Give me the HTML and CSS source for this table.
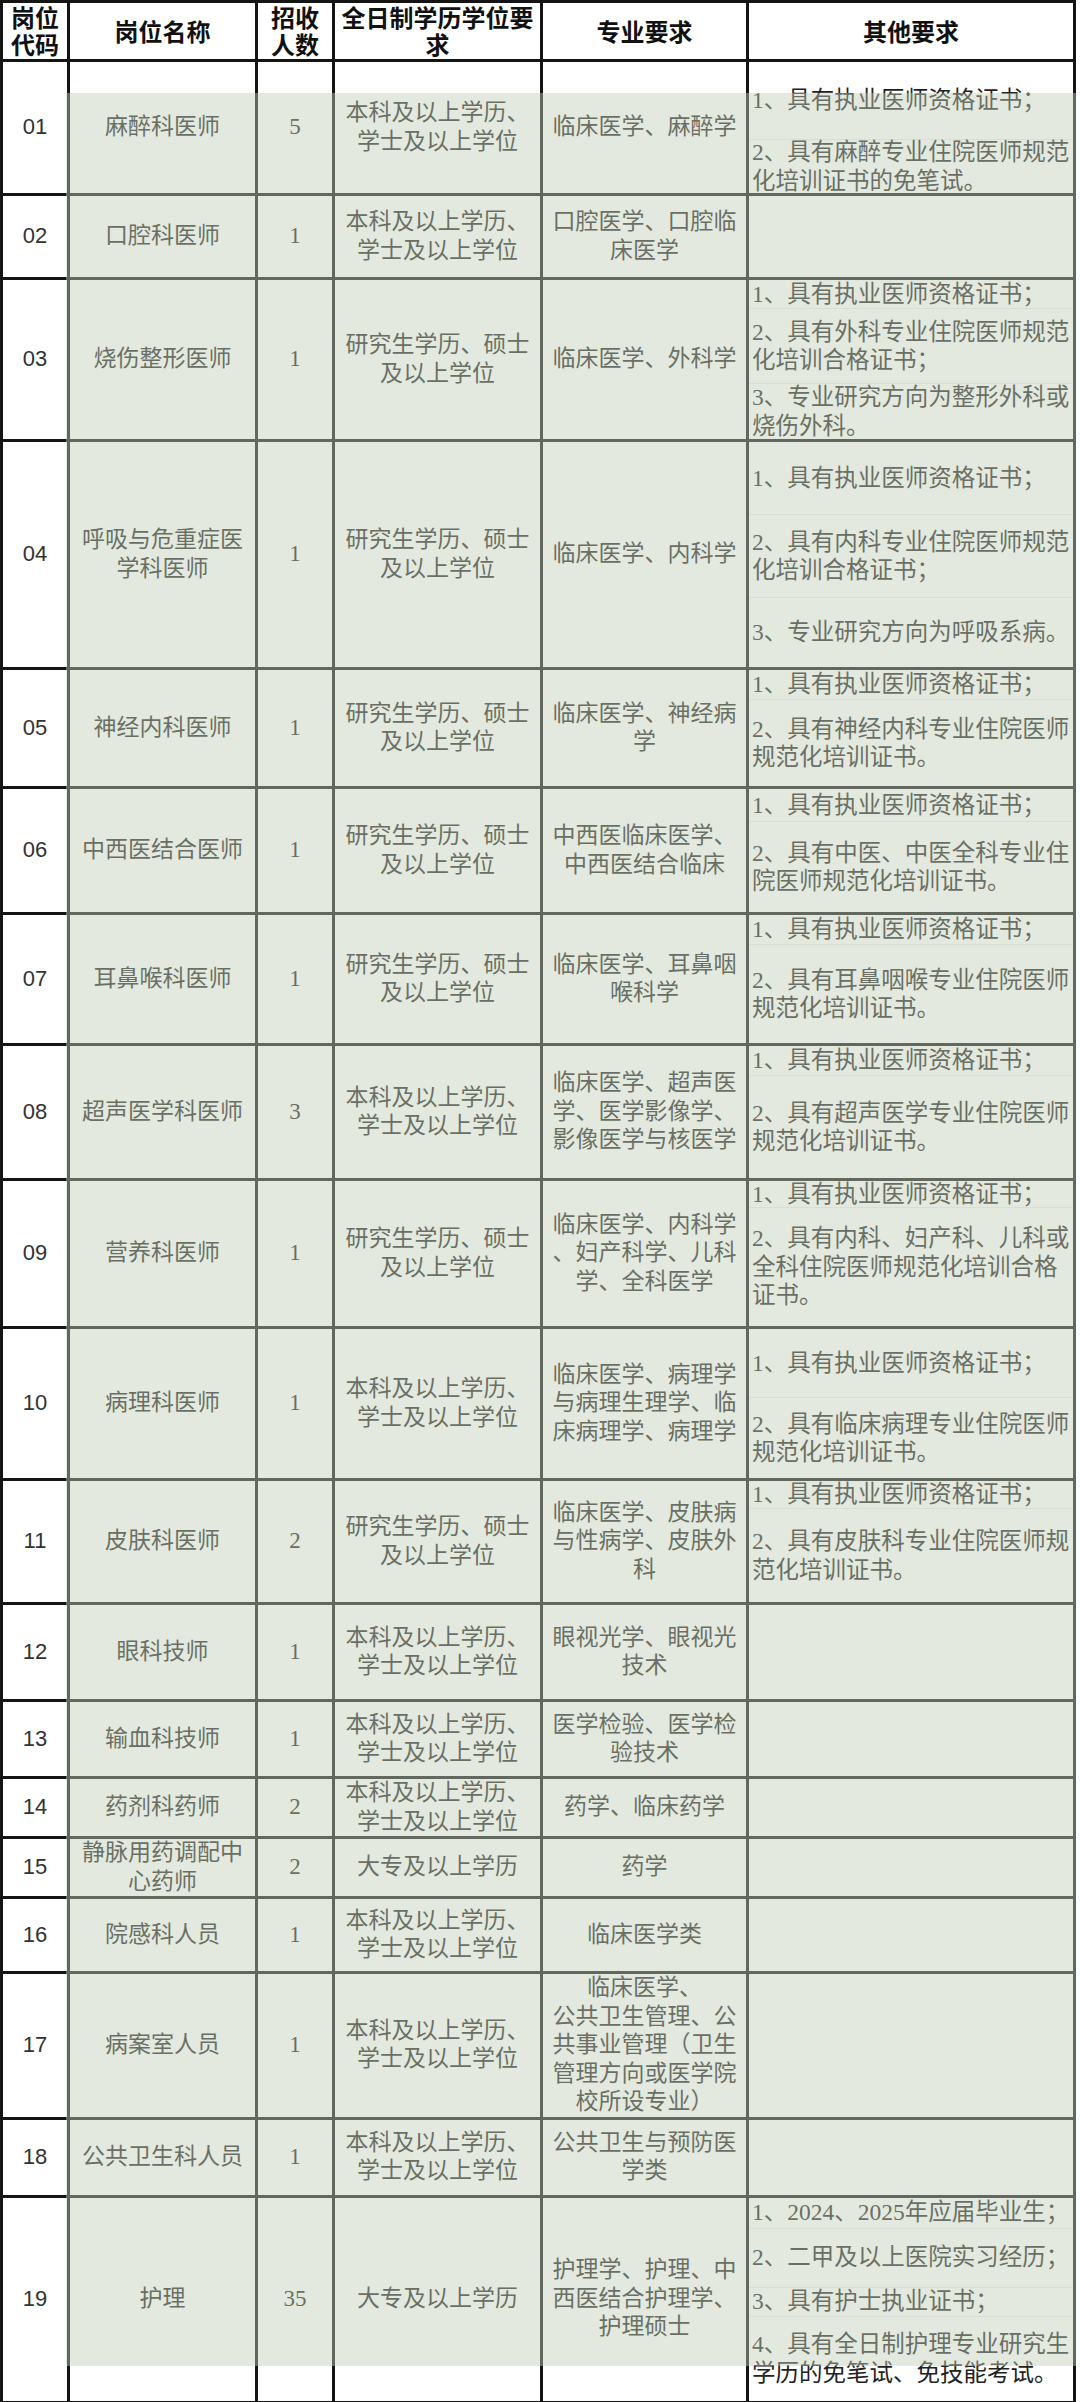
FILE: index.html
```html
<!DOCTYPE html>
<html lang="zh-CN">
<head>
<meta charset="utf-8">
<title>岗位表</title>
<link rel="stylesheet" href="styles.css">
</head>
<body>
<div class="sheet">
<table class="grid">
<colgroup><col class="c1"><col class="c2"><col class="c3"><col class="c4"><col class="c5"><col class="c6"></colgroup>
<thead>
<tr class="hd"><th>岗位<br>代码</th><th>岗位名称</th><th>招收<br>人数</th><th>全日制学历学位要<br>求</th><th>专业要求</th><th>其他要求</th></tr>
</thead>
<tbody>
<tr class="r01"><td class="code">01</td><td>麻醉科医师</td><td>5</td><td>本科及以上学历、<br>学士及以上学位</td><td>临床医学、麻醉学</td>
<td class="other"><div class="items g01"><div class="item"><p class="t">1、具有执业医师资格证书；</p></div><div class="item"><p class="t">2、具有麻醉专业住院医师规范<br>化培训证书的免笔试。</p></div></div></td></tr>

<tr class="r02"><td class="code">02</td><td>口腔科医师</td><td>1</td><td>本科及以上学历、<br>学士及以上学位</td><td>口腔医学、口腔临<br>床医学</td><td class="other"></td></tr>

<tr class="r03"><td class="code">03</td><td>烧伤整形医师</td><td>1</td><td>研究生学历、硕士<br>及以上学位</td><td>临床医学、外科学</td>
<td class="other"><div class="items g03"><div class="item"><p class="t">1、具有执业医师资格证书；</p></div><div class="item"><p class="t">2、具有外科专业住院医师规范<br>化培训合格证书；</p></div><div class="item"><p class="t">3、专业研究方向为整形外科或<br>烧伤外科。</p></div></div></td></tr>

<tr class="r04"><td class="code">04</td><td>呼吸与危重症医<br>学科医师</td><td>1</td><td>研究生学历、硕士<br>及以上学位</td><td>临床医学、内科学</td>
<td class="other"><div class="items g04"><div class="item"><p class="t">1、具有执业医师资格证书；</p></div><div class="item"><p class="t">2、具有内科专业住院医师规范<br>化培训合格证书；</p></div><div class="item"><p class="t">3、专业研究方向为呼吸系病。</p></div></div></td></tr>

<tr class="r05"><td class="code">05</td><td>神经内科医师</td><td>1</td><td>研究生学历、硕士<br>及以上学位</td><td>临床医学、神经病<br>学</td>
<td class="other"><div class="items g05"><div class="item"><p class="t">1、具有执业医师资格证书；</p></div><div class="item"><p class="t">2、具有神经内科专业住院医师<br>规范化培训证书。</p></div></div></td></tr>

<tr class="r06"><td class="code">06</td><td>中西医结合医师</td><td>1</td><td>研究生学历、硕士<br>及以上学位</td><td>中西医临床医学、<br>中西医结合临床</td>
<td class="other"><div class="items g06"><div class="item"><p class="t">1、具有执业医师资格证书；</p></div><div class="item"><p class="t">2、具有中医、中医全科专业住<br>院医师规范化培训证书。</p></div></div></td></tr>

<tr class="r07"><td class="code">07</td><td>耳鼻喉科医师</td><td>1</td><td>研究生学历、硕士<br>及以上学位</td><td>临床医学、耳鼻咽<br>喉科学</td>
<td class="other"><div class="items g07"><div class="item"><p class="t">1、具有执业医师资格证书；</p></div><div class="item"><p class="t">2、具有耳鼻咽喉专业住院医师<br>规范化培训证书。</p></div></div></td></tr>

<tr class="r08"><td class="code">08</td><td>超声医学科医师</td><td>3</td><td>本科及以上学历、<br>学士及以上学位</td><td>临床医学、超声医<br>学、医学影像学、<br>影像医学与核医学</td>
<td class="other"><div class="items g08"><div class="item"><p class="t">1、具有执业医师资格证书；</p></div><div class="item"><p class="t">2、具有超声医学专业住院医师<br>规范化培训证书。</p></div></div></td></tr>

<tr class="r09"><td class="code">09</td><td>营养科医师</td><td>1</td><td>研究生学历、硕士<br>及以上学位</td><td>临床医学、内科学<br>、妇产科学、儿科<br>学、全科医学</td>
<td class="other"><div class="items g09"><div class="item"><p class="t">1、具有执业医师资格证书；</p></div><div class="item"><p class="t">2、具有内科、妇产科、儿科或<br>全科住院医师规范化培训合格<br>证书。</p></div></div></td></tr>

<tr class="r10"><td class="code">10</td><td>病理科医师</td><td>1</td><td>本科及以上学历、<br>学士及以上学位</td><td>临床医学、病理学<br>与病理生理学、临<br>床病理学、病理学</td>
<td class="other"><div class="items g10"><div class="item"><p class="t">1、具有执业医师资格证书；</p></div><div class="item"><p class="t">2、具有临床病理专业住院医师<br>规范化培训证书。</p></div></div></td></tr>

<tr class="r11"><td class="code">11</td><td>皮肤科医师</td><td>2</td><td>研究生学历、硕士<br>及以上学位</td><td>临床医学、皮肤病<br>与性病学、皮肤外<br>科</td>
<td class="other"><div class="items g11"><div class="item"><p class="t">1、具有执业医师资格证书；</p></div><div class="item"><p class="t">2、具有皮肤科专业住院医师规<br>范化培训证书。</p></div></div></td></tr>

<tr class="r12"><td class="code">12</td><td>眼科技师</td><td>1</td><td>本科及以上学历、<br>学士及以上学位</td><td>眼视光学、眼视光<br>技术</td><td class="other"></td></tr>

<tr class="r13"><td class="code">13</td><td>输血科技师</td><td>1</td><td>本科及以上学历、<br>学士及以上学位</td><td>医学检验、医学检<br>验技术</td><td class="other"></td></tr>

<tr class="r14"><td class="code">14</td><td>药剂科药师</td><td>2</td><td>本科及以上学历、<br>学士及以上学位</td><td>药学、临床药学</td><td class="other"></td></tr>

<tr class="r15"><td class="code">15</td><td>静脉用药调配中<br>心药师</td><td>2</td><td>大专及以上学历</td><td>药学</td><td class="other"></td></tr>

<tr class="r16"><td class="code">16</td><td>院感科人员</td><td>1</td><td>本科及以上学历、<br>学士及以上学位</td><td>临床医学类</td><td class="other"></td></tr>

<tr class="r17"><td class="code">17</td><td>病案室人员</td><td>1</td><td>本科及以上学历、<br>学士及以上学位</td><td>临床医学、<br>公共卫生管理、公<br>共事业管理（卫生<br>管理方向或医学院<br>校所设专业）</td><td class="other"></td></tr>

<tr class="r18"><td class="code">18</td><td>公共卫生科人员</td><td>1</td><td>本科及以上学历、<br>学士及以上学位</td><td>公共卫生与预防医<br>学类</td><td class="other"></td></tr>

<tr class="r19"><td class="code">19</td><td>护理</td><td>35</td><td>大专及以上学历</td><td>护理学、护理、中<br>西医结合护理学、<br>护理硕士</td>
<td class="other"><div class="items g19"><div class="item"><p class="t">1、2024、2025年应届毕业生；</p></div><div class="item"><p class="t">2、二甲及以上医院实习经历；</p></div><div class="item"><p class="t">3、具有护士执业证书；</p></div><div class="item"><p class="t">4、具有全日制护理专业研究生<br>学历的免笔试、免技能考试。</p></div></div></td></tr>
</tbody>
</table>
<div class="shade"></div>
</div>
<div class="edge"></div>
</body>
</html>
```

FILE: styles.css
```css
html, body {
  margin: 0;
  padding: 0;
  background: #ffffff;
}

.sheet {
  position: relative;
  width: 1080px;
}

.grid {
  width: 1076px;
  border-collapse: collapse;
  table-layout: fixed;
}

.c1 { width: 67px; }
.c2 { width: 188px; }
.c3 { width: 77px; }
.c4 { width: 208px; }
.c5 { width: 206px; }
.c6 { width: auto; }

.grid th,
.grid td {
  border: 3px solid #141414;
  padding: 0 4px;
  vertical-align: middle;
  text-align: center;
  white-space: nowrap;
  overflow: visible;
}

.grid th {
  font-family: "Liberation Sans", "Noto Sans CJK SC", sans-serif;
  font-weight: 700;
  font-size: 24px;
  line-height: 27px;
  color: #111111;
  padding: 2px 1px 0;
}

.grid td {
  font-family: "Liberation Serif", "Noto Sans CJK SC", sans-serif;
  font-weight: 400;
  font-size: 23px;
  line-height: 28.5px;
  color: #222222;
}

.grid td.code {
  font-family: "Liberation Sans", "Noto Sans CJK SC", sans-serif;
  font-size: 22px;
  color: #333333;
  padding: 0;
}

.grid td.other {
  padding: 0;
  text-align: left;
  font-size: 23.5px;
}

.items {
  display: grid;
}

.item {
  display: flex;
  align-items: center;
  padding-left: 3px;
  min-height: 0;
}

.item + .item {
  border-top: 1px solid #ebebeb;
}

.t {
  margin: 0;
  line-height: 28.5px;
}

.hd  { height: 59px; }
.r01 { height: 134px; }
.r02 { height: 84px; }
.r03 { height: 162px; }
.r04 { height: 228px; }
.r05 { height: 119px; }
.r06 { height: 126px; }
.r07 { height: 131px; }
.r08 { height: 135px; }
.r09 { height: 148px; }
.r10 { height: 152px; }
.r11 { height: 124px; }
.r12 { height: 97px; }
.r13 { height: 77px; }
.r14 { height: 57px; }
.r15 { height: 59px; }
.r16 { height: 75px; }
.r17 { height: 141px; }
.r18 { height: 78px; }
.r19 { height: 206px; }

.g01 { height: 131px; grid-template-rows: 77px minmax(0, 1fr); }
.g03 { height: 159px; grid-template-rows: 28px 75px minmax(0, 1fr); }
.g04 { height: 225px; grid-template-rows: 72px 83px minmax(0, 1fr); }
.g05 { height: 116px; grid-template-rows: 29px minmax(0, 1fr); }
.g06 { height: 123px; grid-template-rows: 32px minmax(0, 1fr); }
.g07 { height: 128px; grid-template-rows: 29px minmax(0, 1fr); }
.g08 { height: 132px; grid-template-rows: 29px minmax(0, 1fr); }
.g09 { height: 145px; grid-template-rows: 26px minmax(0, 1fr); }
.g10 { height: 149px; grid-template-rows: 68px minmax(0, 1fr); }
.g11 { height: 121px; grid-template-rows: 27px minmax(0, 1fr); }
.g19 { height: 203px; grid-template-rows: 30px 59px 29px minmax(0, 1fr); }

.shade {
  position: absolute;
  left: 66px;
  top: 93px;
  width: 1010px;
  height: 2273px;
  background: rgba(192, 206, 181, 0.45);
  pointer-events: none;
}

.edge {
  margin-top: 3px;
  border-top: 4px solid #222222;
}
```
